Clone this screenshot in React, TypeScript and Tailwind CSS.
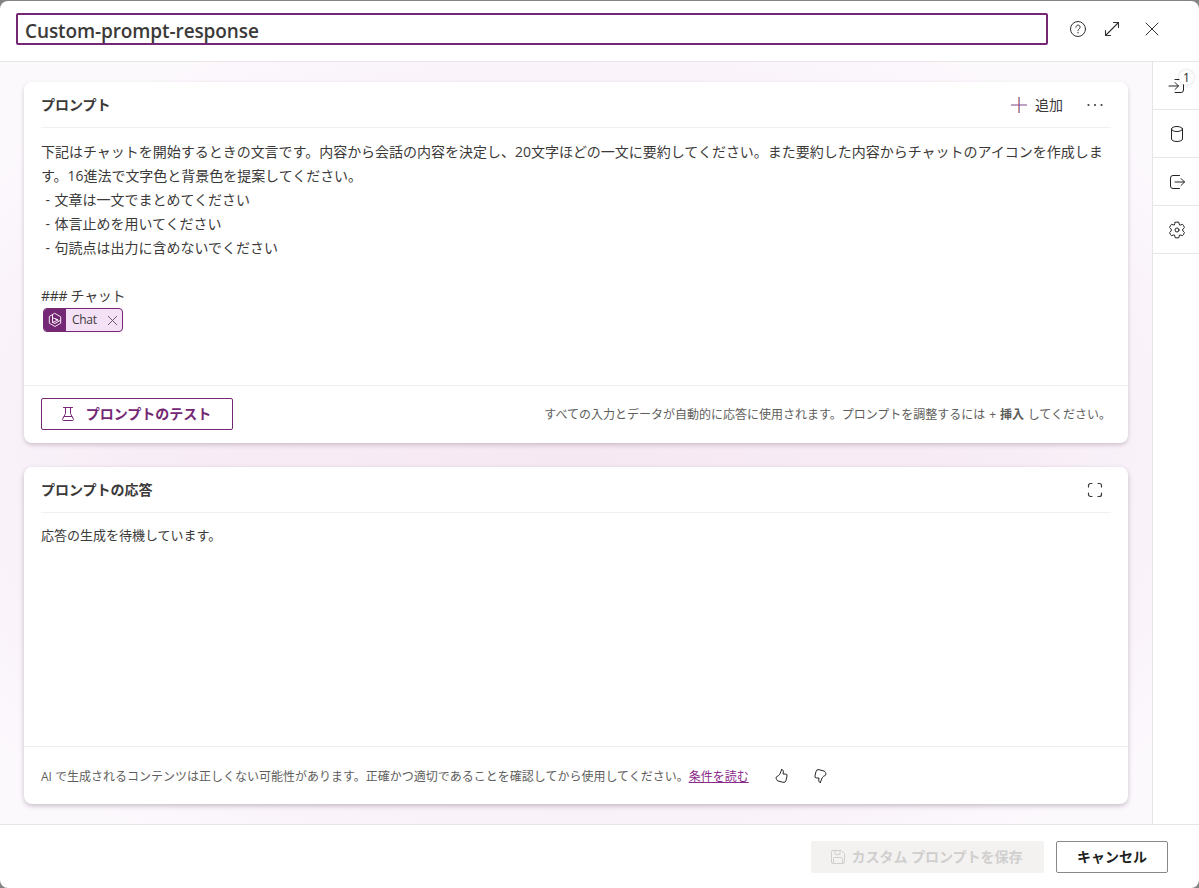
import React from 'react';

type IconProps = { className?: string; children: React.ReactNode; size?: number; w?: number };

function Icon({ className = '', children, size = 20, w = 1 }: IconProps) {
  return (
    <svg
      className={'block shrink-0 ' + className}
      width={size}
      height={size}
      viewBox={`0 0 ${size} ${size}`}
      fill="none"
      stroke="currentColor"
      strokeWidth={w}
      strokeLinecap="round"
      strokeLinejoin="round"
    >
      {children}
    </svg>
  );
}

const HelpIcon = () => (
  <Icon>
    <circle cx="10" cy="10" r="7.500" />
    <path d="M7.900 8.200a2.100 2.100 0 1 1 3.500 1.500c-.8.7-1.400 1-1.400 2" />
    <circle cx="10" cy="13.700" r=".7" fill="currentColor" stroke="none" />
  </Icon>
);

const ExpandIcon = () => (
  <Icon w={1.100}>
    <path d="M11.500 3.500h5v5M16.500 3.500 3.500 16.500M3.500 11.500v5h5" />
  </Icon>
);

const CloseIcon = () => (
  <Icon>
    <path d="m4 4 12 12M16 4 4 16" />
  </Icon>
);

const InputIcon = () => (
  <Icon>
    <path d="M8 3.500h6a2.500 2.500 0 0 1 2.500 2.500v8a2.500 2.500 0 0 1-2.500 2.500h-6M2 10h9.500M8 6.500l3.500 3.500-3.500 3.500" />
  </Icon>
);

const DatabaseIcon = () => (
  <Icon>
    <ellipse cx="10" cy="5" rx="5.500" ry="2.500" />
    <path d="M4.500 5v10c0 1.400 2.500 2.500 5.500 2.500s5.500-1.100 5.500-2.500V5" />
  </Icon>
);

const OutputIcon = () => (
  <Icon>
    <path d="M12.500 3.500H6A2.500 2.500 0 0 0 3.500 6v8A2.500 2.500 0 0 0 6 16.500h6.500M8 10h9.500M14 6.500l3.500 3.500-3.500 3.500" />
  </Icon>
);

const GearIcon = () => (
  <Icon>
    <path d="M8.100 2.300Q10 1.900 11.900 2.300L12.200 4a1.100 1.100 0 0 0 1.600.9l1.700-.6a8 8 0 0 1 1.900 3.200L16.100 8.900a1.450 1.450 0 0 0 0 2.200l1.300 1.400a8 8 0 0 1-1.900 3.200l-1.700-.6a1.100 1.100 0 0 0-1.600.9l-.3 1.700Q10 18.100 8.100 17.700L7.800 16a1.100 1.100 0 0 0-1.600-.9l-1.700.6a8 8 0 0 1-1.900-3.200L3.900 11.100a1.450 1.450 0 0 0 0-2.200L2.600 7.500a8 8 0 0 1 1.900-3.200l1.700.6A1.100 1.100 0 0 0 7.800 4z" />
    <circle cx="10" cy="10" r="2" />
  </Icon>
);

const FlaskIcon = () => (
  <Icon size={16}>
    <path d="M3.500 1.500h9M5.500 1.500v6L2.600 13a1 1 0 0 0 .9 1.500h9a1 1 0 0 0 .9-1.500l-2.900-5.500v-6M4.200 10.500h7.600" />
  </Icon>
);

const SaveIcon = () => (
  <Icon size={16}>
    <path d="M3 1.500h8.500l3 3V13a1.500 1.500 0 0 1-1.500 1.500H3A1.500 1.500 0 0 1 1.500 13V3A1.500 1.500 0 0 1 3 1.500zM5 1.500v3.500a.5.5 0 0 0 .5.5h4a.5.5 0 0 0 .5-.5V1.500M3.500 14.500V9.500a1 1 0 0 1 1-1h7a1 1 0 0 1 1 1v5" />
  </Icon>
);

const FullScreenIcon = () => (
  <Icon size={16} w={1.200}>
    <path d="M1.500 5V3.500a2 2 0 0 1 2-2H5M11 1.500h1.500a2 2 0 0 1 2 2V5M14.500 11v1.500a2 2 0 0 1-2 2H11M5 14.500H3.500a2 2 0 0 1-2-2V11" />
  </Icon>
);

const ThumbIcon = ({ className = '' }: { className?: string }) => (
  <Icon size={16} className={className}>
    <path d="M8.700 1.600c1.500-.2 2 1.600 1.300 4.400h2.300a1.700 1.700 0 0 1 1.700 2.100l-1 4.300a2.500 2.500 0 0 1-3.100 1.900l-5-1.400a1.800 1.800 0 0 1-1.300-1.300l-.5-1.300a1.700 1.700 0 0 1 1-1.900c1.800-.8 2.500-1.600 3.200-3.300.5-1.200.7-2.400 1.400-3.500z" />
  </Icon>
);

const ChipIcon = () => (
  <Icon size={16} w={0.9}>
    <path d="M8 1.500 13.700 4.800v6.400L8 14.500 2.300 11.200V4.800zM5.500 3.200v7.300L11 8 5.500 5.700M5.500 10.500l2.500 1 5.500-3.300M11 8 8.500 6.800" />
  </Icon>
);

function RailItem({ children }: { children: React.ReactNode }) {
  return (
    <button className="relative flex h-12 w-full items-center justify-center border-b border-[#e6e6e6] pl-[2px] text-[#242424]">
      {children}
    </button>
  );
}

export default function App() {
  return (
    <div className="h-[888px] w-[1199px] overflow-hidden bg-[#848484] pt-px font-['Open_Sans','Noto_Sans_CJK_JP',sans-serif] text-[#3b3a39]">
      <div className="flex h-[887px] flex-col overflow-hidden rounded-lg bg-white">
        <header className="flex h-[61px] shrink-0 border-b border-[#e8e6e8] pl-4 pt-3">
          <div className="flex h-8 w-[1032px] items-center rounded-[2px] border-2 border-[#742774] pl-[7px] pt-1 text-[19px] font-semibold leading-none tracking-[-0.1px]">
            Custom-prompt-response
          </div>
          <div className="ml-5 flex h-8 items-center text-[#323130]">
            <HelpIcon />
            <div className="ml-[14px]"><ExpandIcon /></div>
            <div className="ml-5"><CloseIcon /></div>
          </div>
        </header>

        <div className="flex min-h-0 flex-1">
          <main className="flex flex-1 flex-col gap-6 bg-[radial-gradient(ellipse_65%_62%_at_50%_52%,#f6e8f2_0%,#f7edf6_60%,#fcf9fd_100%)] px-6 pb-5 pt-5">
            <section className="flex h-[361px] flex-col rounded-lg bg-white shadow-[0_2px_4px_rgba(60,30,60,0.22)]">
              <div className="mx-[17px] flex h-[46px] shrink-0 items-center border-b border-[#f0f0f0]">
                <h2 className="text-[14px] font-semibold leading-5">プロンプト</h2>
                <button className="ml-auto flex items-center gap-[7px] text-[14px] leading-5">
                  <svg width="18" height="18" viewBox="0 0 18 18" className="block">
                    <path d="M8.500 1v16" stroke="#e0987c" strokeWidth="1" />
                    <path d="M9.500 1v16" stroke="#8f8fd0" strokeWidth="1" />
                    <path d="M1 9h16" stroke="#84428c" strokeWidth="1.200" />
                  </svg>
                  追加
                </button>
                <svg width="18" height="4" viewBox="0 0 18 4" className="ml-[23px] mr-[7px] block" fill="#424242">
                  <circle cx="2.500" cy="2" r="1.100" />
                  <circle cx="9" cy="2" r="1.100" />
                  <circle cx="15.500" cy="2" r="1.100" />
                </svg>
              </div>
              <div className="flex-1 px-[17px] pt-3 text-[14px] leading-6">
                <p className="whitespace-nowrap tracking-[-0.015px]">下記はチャットを開始するときの文言です。内容から会話の内容を決定し、20文字ほどの一文に要約してください。また要約した内容からチャットのアイコンを作成しま</p>
                <p className="tracking-[-0.03px]">す。16進法で文字色と背景色を提案してください。</p>
                <p className="whitespace-pre [word-spacing:0.8px]"> - 文章は一文でまとめてください</p>
                <p className="whitespace-pre [word-spacing:0.8px]"> - 体言止めを用いてください</p>
                <p className="whitespace-pre [word-spacing:0.8px]"> - 句読点は出力に含めないでください</p>
                <p className="h-6" />
                <p className="tracking-[-0.3px]">### チャット</p>
                <div className="ml-[2px] flex h-6 w-20 items-center overflow-hidden rounded-[4px] border border-[#742774] bg-[#f5e1f5] text-[12px]">
                  <span className="flex h-full w-[22px] shrink-0 items-center justify-center bg-[#742774] text-white">
                    <ChipIcon />
                  </span>
                  <span className="ml-[6px] leading-none tracking-[-0.3px]">Chat</span>
                  <svg width="11" height="11" viewBox="0 0 11 11" className="ml-auto mr-1 block" stroke="#6b5a6b" fill="none">
                    <path d="m1 1 9 9M10 1 1 10" />
                  </svg>
                </div>
              </div>
              <div className="flex h-[58px] shrink-0 items-center border-t border-[#f0f0f0] pb-px pl-[17px] pr-[17px]">
                <button className="flex h-8 w-48 items-center justify-center gap-[10px] rounded-[2px] border border-[#742774] pb-px pr-[3px] text-[14px] font-semibold text-[#742774]">
                  <FlaskIcon />
                  プロンプトのテスト
                </button>
                <p className="ml-auto whitespace-nowrap pt-0.5 text-[12px] text-[#605e5c] [word-spacing:0.7px]">
                  すべての入力とデータが自動的に応答に使用されます。プロンプトを調整するには + <b className="font-semibold">挿入</b> してください。
                </p>
              </div>
            </section>

            <section className="flex h-[337px] flex-col rounded-lg bg-white shadow-[0_2px_5px_rgba(60,30,60,0.27)]">
              <div className="mx-[17px] flex h-[46px] shrink-0 items-center border-b border-[#f0f0f0]">
                <h2 className="text-[14px] font-semibold">プロンプトの応答</h2>
                <div className="ml-auto mr-2"><FullScreenIcon /></div>
              </div>
              <p className="flex-1 px-[17px] pt-[10px] text-[13px] leading-6">応答の生成を待機しています。</p>
              <div className="flex h-[58px] shrink-0 items-center border-t border-[#f0f0f0] pl-[17px] text-[12px] text-[#605e5c]">
                <p className="whitespace-nowrap pt-0.5">
                  AI で生成されるコンテンツは正しくない可能性があります。正確かつ適切であることを確認してから使用してください。
                  <a className="text-[#8a2a8a] underline">条件を読む</a>
                </p>
                <div className="ml-6 text-[#242424]"><ThumbIcon /></div>
                <div className="ml-6 text-[#242424]"><ThumbIcon className="rotate-180" /></div>
              </div>
            </section>
          </main>

          <aside className="w-[47px] shrink-0 border-l border-[#e6e6e6] bg-white">
            <RailItem>
              <InputIcon />
              <span className="absolute right-[5px] top-2 flex h-[15px] w-[15px] items-center justify-center rounded-full bg-white text-[12px] leading-none text-[#242424] shadow-[0_0_3px_rgba(0,0,0,0.2)]">1</span>
            </RailItem>
            <RailItem><DatabaseIcon /></RailItem>
            <RailItem><OutputIcon /></RailItem>
            <RailItem><GearIcon /></RailItem>
          </aside>
        </div>

        <footer className="flex h-16 shrink-0 items-center justify-end gap-3 border-t border-[#e6e4e4] pr-[31px] text-[14px] font-semibold">
          <button className="flex h-8 w-[233px] items-center justify-center gap-[5px] rounded-[2px] bg-[#f3f2f1] pr-[2px] text-[#d0cfce]">
            <SaveIcon />
            カスタム プロンプトを保存
          </button>
          <button className="h-8 w-28 rounded-[2px] border border-[#8a8886] text-[#201f1e]">キャンセル</button>
        </footer>
      </div>
    </div>
  );
}
